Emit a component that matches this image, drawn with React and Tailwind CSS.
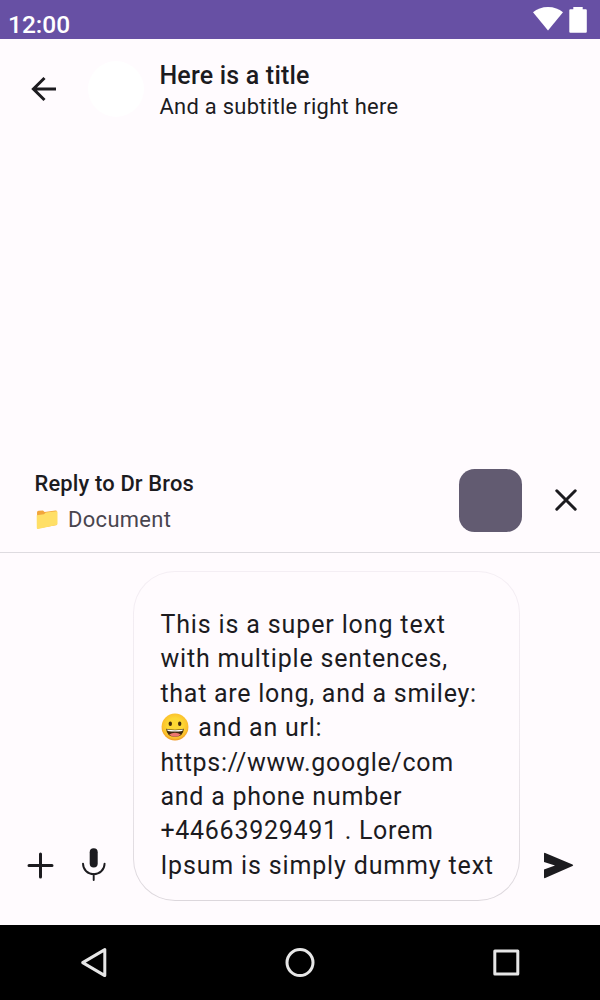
import React from "react";

function StatusBar() {
  return (
    <header className="flex h-[39px] shrink-0 items-start justify-between bg-[#6750a4] pl-[8px] pr-[13px] text-white">
      <span className="pt-[9.5px] text-[24.5px] leading-[30px] font-medium">12:00</span>
      <div className="flex gap-[6px] pt-[7px]">
        <svg width="30" height="24" viewBox="0 0 30 24" fill="currentColor">
          <path d="M15 0C9 0 4 2 0 5.2L15 23.5 30 5.2C26 2 21 0 15 0Z" />
        </svg>
        <svg width="18" height="26" viewBox="0 0 18 26" fill="currentColor">
          <path d="M4.3 0h9.4v2.2h3.1q1 0 1 1v21.6q0 1-1 1H1.3q-1 0-1-1V3.2q0-1 1-1h3z" />
        </svg>
      </div>
    </header>
  );
}

function TopBar() {
  return (
    <div className="flex h-[100px] shrink-0 items-center pl-[31px]">
      <svg width="26" height="26" viewBox="0 0 26 26" fill="none" stroke="#1c1b1f" strokeWidth="3">
        <path d="M25 13H2.4M13.5 2 2.4 13l11.1 11" />
      </svg>
      <div className="ml-[31px] size-[56px] rounded-full bg-white" />
      <div className="ml-[15.4px] flex flex-col pt-[4px]">
        <span className="text-[25px] leading-[32px] font-medium tracking-[0.2px]">Here is a title</span>
        <span className="text-[21.9px] leading-[30px] tracking-[0.31px]">And a subtitle right here</span>
      </div>
    </div>
  );
}

function Folder() {
  return (
    <svg className="mt-[2px]" width="22" height="20" viewBox="0 0 22 20">
      <path d="M1 2.4Q1 .8 2.5.7L7 .4 8.6 2 19.5.6Q21 .5 21 2v13L1.5 18.5z" fill="#f2a63c" />
      <path d="M.7 5.3 8 4.3 9.8 2.5 20.4 1.2Q21.5 1 21.5 2.2v11.6q0 1-1 1.3L2 19Q.8 19.2.8 18z" fill="#ffdf66" />
    </svg>
  );
}

function Smiley() {
  return (
    <svg className="mr-[2px] inline-block align-[-5px]" width="29" height="28" viewBox="0 0 29 28">
      <defs>
        <radialGradient id="face" cx="50%" cy="45%" r="55%">
          <stop offset="0.5" stopColor="#fdd835" />
          <stop offset="0.85" stopColor="#fbc02d" />
          <stop offset="1" stopColor="#ef9722" />
        </radialGradient>
      </defs>
      <circle cx="15" cy="14" r="13.4" fill="url(#face)" />
      <ellipse cx="10.3" cy="10.8" rx="1.7" ry="2.3" fill="#422b0d" />
      <ellipse cx="19.7" cy="10.8" rx="1.7" ry="2.3" fill="#422b0d" />
      <path d="M6.2 15.8q8.8 1.8 17.6 0-.4 8-8.8 8t-8.8-8z" fill="#422b0d" />
      <path d="M7 16.4q8 1.5 16 0l-.7 1.7q-7.3 1-14.6 0z" fill="#fff" />
      <path d="M9.2 21.4q2.6-1.6 5.8-1.6t5.8 1.6q-2.2 2.4-5.8 2.4t-5.8-2.4z" fill="#ed7770" />
    </svg>
  );
}

function ReplyBar() {
  return (
    <div className="flex h-[105px] shrink-0 items-center border-b border-[#dedbe0] pl-[34.5px] pr-[23px]">
      <div className="flex flex-1 flex-col pt-[2px]">
        <span className="text-[21.9px] leading-[31px] font-medium tracking-[0.16px]">Reply to Dr Bros</span>
        <div className="mt-[5px] flex h-[31px] items-center gap-[10px] pl-[1.5px] text-[#49454f]">
          <Folder />
          <span className="text-[21.9px] leading-[31px] tracking-[0.36px]">Document</span>
        </div>
      </div>
      <div className="size-[63px] rounded-[15.6px] bg-[#625b71]" />
      <svg className="ml-[33px]" width="22" height="22" viewBox="0 0 22 22" fill="none" stroke="#1c1b1f" strokeWidth="3" strokeLinecap="round">
        <path d="M1.8 1.8 20.2 20.2M20.2 1.8 1.8 20.2" />
      </svg>
    </div>
  );
}

function Composer() {
  return (
    <div className="flex h-[372px] shrink-0 items-end pb-[24px] pl-[27px]">
      <svg className="mb-[22px]" width="27" height="27" viewBox="0 0 27 27" fill="none" stroke="#1c1b1f" strokeWidth="3" strokeLinecap="round">
        <path d="M13.5 2v23M2 13.5h23" />
      </svg>
      <svg className="mb-[19px] ml-[28px]" width="24" height="34" viewBox="0 0 24 34" fill="none" stroke="#1c1b1f">
        <path d="M11.7 4.2v11.4" strokeWidth="8" strokeLinecap="round" />
        <path d="M1 15.6C1 22 6 26.2 11.7 26.2S22.6 22 22.6 15.6M11.7 26v6" strokeWidth="1.9" strokeLinecap="round" />
      </svg>
      <div className="ml-[27px] h-[330px] w-[387px] rounded-[42px] bg-linear-to-b from-[#f4eef4] via-[#eee9ee] to-[#dcd7dc] p-px pb-[1.5px]">
        <div className="h-full rounded-[41px] bg-[#fffbfe] pl-[26.4px] pt-[36px] text-[25px] leading-[34.4px] tracking-[0.76px] whitespace-nowrap">
          <p className="tracking-[0.86px]">This is a super long text</p>
          <p className="tracking-[0.82px]">with multiple sentences,</p>
          <p className="tracking-[0.73px]">that are long, and a smiley:</p>
          <p className="h-[34.4px]"><Smiley /> and an url:</p>
          <p className="tracking-[0.7px]">https://www.google/com</p>
          <p>and a phone number</p>
          <p className="tracking-[0.72px]">+44663929491 . Lorem</p>
          <p className="tracking-[0.84px]">Ipsum is simply dummy text</p>
        </div>
      </div>
      <svg className="mb-[22px] ml-[23px]" width="31" height="27" viewBox="0 0 31 27" fill="#1c1b1f">
        <path d="M1 1.8Q1 .5 2.2 1L29.5 12.4Q31 13.2 29.5 14L2.2 26Q1 26.5 1 25.2V17.5L12 13.5 1 10z" />
      </svg>
    </div>
  );
}

function NavigationBar() {
  return (
    <nav className="flex h-[75px] shrink-0 items-center justify-between bg-black pl-[80px] pr-[80px]">
      <svg width="28" height="32" viewBox="0 0 28 32" fill="none" stroke="#e6e6e6" strokeWidth="3" strokeLinejoin="round">
        <path d="M24.8 2.6v26L2.7 15.6z" />
      </svg>
      <svg width="30" height="30" viewBox="0 0 30 30" fill="none" stroke="#e6e6e6" strokeWidth="3">
        <circle cx="15" cy="14.6" r="13" />
      </svg>
      <svg width="28" height="28" viewBox="0 0 28 28" fill="none" stroke="#e6e6e6" strokeWidth="3" strokeLinejoin="round">
        <rect x="2.8" y="2" width="23" height="23" />
      </svg>
    </nav>
  );
}

export default function App() {
  return (
    <main className="flex h-[1000px] w-[600px] flex-col overflow-hidden bg-[#fffbfe] font-['Roboto',sans-serif] text-[#1c1b1f]">
      <StatusBar />
      <TopBar />
      <div className="flex-1" />
      <ReplyBar />
      <Composer />
      <NavigationBar />
    </main>
  );
}
